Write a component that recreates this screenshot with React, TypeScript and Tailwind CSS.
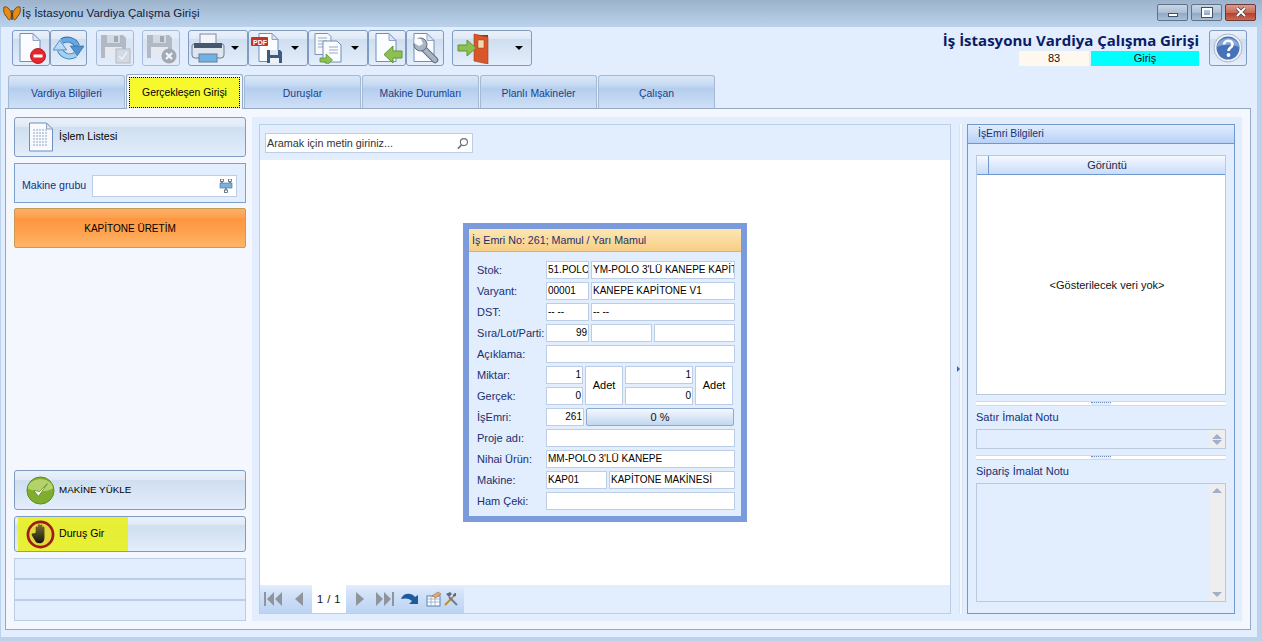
import React from "react";

const glossBtn =
  "bg-[linear-gradient(#e9f1fb_0%,#dfe9f6_24%,#cfdff0_25%,#d8e5f5_60%,#e4eefc_100%)] border border-[#7f9bc2] rounded-[3px]";

const Doc = ({ children }: { children?: React.ReactNode }) => (
  <svg viewBox="0 0 32 32" className="w-[32px] h-[32px]">
    <path d="M5 1.5h13l7 7v21H5z" fill="#fbfcff" stroke="#6f8fb8" />
    <path d="M18 1.5v7h7z" fill="#dfe6f0" stroke="#8ea6c6" />
    {children}
  </svg>
);

const Floppy = ({ children, faded }: { children?: React.ReactNode; faded?: boolean }) => (
  <svg viewBox="0 0 32 32" className={`w-[32px] h-[32px] ${faded ? "opacity-90" : ""}`}>
    <path d="M2 3h22l3 3v20H2z" fill="#8c9096" />
    <rect x="8" y="3" width="13" height="8" fill="#c9ccd0" />
    <rect x="15" y="4" width="4" height="6" fill="#6c7076" />
    <rect x="6" y="15" width="17" height="11" fill="#e8e9eb" />
    {children}
  </svg>
);

const Arrow = ({ x = 0, y = 0 }: { x?: number; y?: number }) => (
  <g transform={`translate(${x} ${y})`}>
    <path d="M0 3h6V-1l6.5 6L6 11V7H0z" fill="#8cc152" stroke="#5d9632" strokeWidth="0.8" />
  </g>
);

const Caret = () => <span className="w-0 h-0 border-x-[4px] border-x-transparent border-t-[4px] border-t-black" />;

const ToolBtn = ({ w, caret, disabled, children }: { w: string; caret?: boolean; disabled?: boolean; children: React.ReactNode }) => (
  <button
    className={`${w} h-[36px] flex items-center justify-between px-[2px] ${glossBtn} ${disabled ? "opacity-60" : ""}`}
  >
    {children}
    {caret && (
      <span className="mr-[6px] flex">
        <Caret />
      </span>
    )}
  </button>
);

const Tab = ({ label, active }: { label: string; active?: boolean }) =>
  active ? (
    <div className="w-[117px] h-[35px] -mt-[2px] bg-[#f4f8fe] border border-b-0 border-[#94a9c4] rounded-t-[3px] p-[2px] pb-0 -mb-[1px] z-10">
      <div className="h-[31px] bg-[#f6f92c] border border-dotted border-black flex items-center justify-center text-black text-[10.4px]">
        {label}
      </div>
    </div>
  ) : (
    <div className="w-[117px] h-[33px] border border-b-0 border-[#a3bad6] rounded-t-[3px] bg-[linear-gradient(#d9e6f7_0%,#c9dcf3_25%,#b4cdee_40%,#cfe0f6_100%)] flex items-center justify-center text-[#15428b] text-[10.4px] pt-[3px]">
      {label}
    </div>
  );

const SideBtn = ({ h, icon, label, hl, caps }: { h: string; icon: React.ReactNode; label: string; hl?: boolean; caps?: boolean }) => (
  <div className={`relative ${h} ${glossBtn} flex items-center pl-[9px] gap-[2px] text-black ${caps ? "text-[9.8px]" : "text-[10.6px]"}`}>
    {hl && <div className="absolute left-[3px] top-0 bottom-0 w-[110px] bg-[#e8f020]/90" />}
    <span className="relative flex w-[33px] justify-center">{icon}</span>
    <span className="relative">{label}</span>
  </div>
);

const Field = ({ w, text, right }: { w: string; text?: string; right?: boolean }) => (
  <div
    className={`${w} h-[18px] bg-white border border-[#bccee6] text-black text-[10px] px-[1px] leading-[16px] overflow-hidden whitespace-nowrap ${right ? "text-right" : ""}`}
  >
    {text}
  </div>
);

const Row = ({ label, children }: { label: string; children: React.ReactNode }) => (
  <div className="flex h-[18px] items-center">
    <span className="w-[69px] text-[#1c2f6e] whitespace-nowrap">{label}</span>
    <div className="flex gap-[2px]">{children}</div>
  </div>
);

const Splitter = () => (
  <div className="h-[5px] border-y border-[#c5dcf8] bg-white flex justify-center items-center">
    <span className="w-[20px] h-[3px] bg-[#e2edfd] border-t border-dotted border-[#6f8fb8]" />
  </div>
);

const ScrollBar = ({ full }: { full?: boolean }) => (
  <div className="w-[16px] bg-[#eeeeee] flex flex-col items-center justify-between py-[3px]">
    <span className="w-0 h-0 border-x-[5px] border-x-transparent border-b-[5px] border-b-[#a3aecb] mt-[1px]" />
    <span className={`w-0 h-0 border-x-[5px] border-x-transparent border-t-[5px] border-t-[#a3aecb] ${full ? "mb-[1px]" : ""}`} />
  </div>
);

const Skip = ({ flip }: { flip?: boolean }) => (
  <svg viewBox="0 0 20 16" className={`w-[20px] h-[16px] ${flip ? "-scale-x-100" : ""}`}>
    <path d="M1 1h2v14H1zM11 1v14L4 8zM19 1v14L12 8z" fill="#8f959c" />
  </svg>
);

export default function App() {
  return (
    <div className="w-[1262px] h-[641px] bg-[#bad2ec] flex flex-col overflow-hidden font-['Liberation_Sans',sans-serif] text-[11px]">
      {/* title bar */}
      <div className="h-[27px] shrink-0 bg-[linear-gradient(#9db3cc,#bad2ec)] flex items-center pl-[3px] pr-[6px]">
        <svg viewBox="0 0 18 16" className="w-[18px] h-[16px]">
          <path d="M8.5 8C7 2 3 0 1 1c-1 3 0 8 3 10 1 3 3 4 4 1z" fill="#e88a17" stroke="#6e4510" strokeWidth=".9" />
          <path d="M9.5 8C11 2 15 0 17 1c1 3 0 8-3 10-1 3-3 4-4 1z" fill="#e88a17" stroke="#6e4510" strokeWidth=".9" />
          <rect x="8.4" y="4" width="1.2" height="10" fill="#3a2a12" />
        </svg>
        <span className="ml-[1px] text-[#10203c] text-[11.5px]">İş İstasyonu Vardiya Çalışma Girişi</span>
        <div className="ml-auto flex gap-[3px] -mt-[3px]">
          <div className="w-[31px] h-[17px] border border-[#5f7288] rounded-[2px] bg-[linear-gradient(#c8d6e6_0%,#aebfd3_50%,#8fa7c2_51%,#a9c0d9_100%)] flex items-end justify-center pb-[3px]">
            <span className="w-[10px] h-[4px] bg-white border border-[#3f5068]" />
          </div>
          <div className="w-[31px] h-[17px] border border-[#5f7288] rounded-[2px] bg-[linear-gradient(#c8d6e6_0%,#aebfd3_50%,#8fa7c2_51%,#a9c0d9_100%)] flex items-center justify-center">
            <span className="w-[10px] h-[9px] bg-transparent border-2 border-white outline outline-[#3f5068]" />
          </div>
          <div className="w-[31px] h-[17px] border border-[#6b3a34] rounded-[2px] bg-[linear-gradient(#dc9a8e_0%,#c96a58_50%,#b23c28_51%,#cc6a55_100%)] flex items-center justify-center">
            <svg viewBox="0 0 12 10" className="w-[12px] h-[10px]">
              <path d="M2 1l8 8M10 1l-8 8" stroke="#3f3f48" strokeWidth="3.4" />
              <path d="M2 1l8 8M10 1l-8 8" stroke="#fff" strokeWidth="2" />
            </svg>
          </div>
        </div>
      </div>

      <div className="flex-1 ml-[1px] mr-[5px] mb-[4px] bg-[#e2edfd] flex flex-col min-h-0">
        {/* toolbar */}
        <div className="h-[43px] shrink-0 flex pt-[3px] pl-[11px] pr-[10px]">
          <div className="flex">
            <ToolBtn w="w-[38px]">
              <Doc>
                <circle cx="23" cy="24" r="7.5" fill="#e8252b" stroke="#b81c20" />
                <rect x="18.5" y="22.5" width="9" height="3" fill="#fff" />
              </Doc>
            </ToolBtn>
            <ToolBtn w="w-[37px]">
              <svg viewBox="0 0 32 32" className="w-[32px] h-[32px]">
                <path d="M9 9A11 11 0 0 1 25 14" fill="none" stroke="#2f6ea8" strokeWidth="6" />
                <path d="M9 9A11 11 0 0 1 25 14" fill="none" stroke="#6aa8de" strokeWidth="4.4" />
                <path d="M18 14h14l-7 10z" fill="#4f93d2" stroke="#2f6ea8" strokeWidth=".8" />
                <path d="M23 23A11 11 0 0 1 7 18" fill="none" stroke="#3a7ab4" strokeWidth="6" />
                <path d="M23 23A11 11 0 0 1 7 18" fill="none" stroke="#a6d0f2" strokeWidth="4.4" />
                <path d="M0 18h14L7 8z" fill="#b6d9f5" stroke="#3a7ab4" strokeWidth=".8" />
              </svg>
            </ToolBtn>
            <div className="w-[9px]" />
            <ToolBtn w="w-[38px]" disabled>
              <Floppy faded>
                <rect x="17" y="17" width="14" height="14" fill="#c9cbce" stroke="#8c9096" />
                <path d="M20 24l3 3 5-7" fill="none" stroke="#f4f4f4" strokeWidth="1.6" />
              </Floppy>
            </ToolBtn>
            <div className="w-[8px]" />
            <ToolBtn w="w-[38px]" disabled>
              <Floppy faded>
                <circle cx="24" cy="24" r="7.5" fill="#6e7176" />
                <path d="M21 21l6 6M27 21l-6 6" stroke="#fff" strokeWidth="2.4" />
              </Floppy>
            </ToolBtn>
            <div className="w-[8px]" />
            <ToolBtn w="w-[60px]" caret>
              <svg viewBox="0 0 34 32" className="w-[34px] h-[32px]">
                <rect x="9" y="2" width="16" height="11" fill="#f2f4f8" stroke="#7d8ca3" />
                <path d="M3 12h28a2 2 0 0 1 2 2v9a3 3 0 0 1-3 3H4a3 3 0 0 1-3-3v-9a2 2 0 0 1 2-2z" fill="#dfe5ee" stroke="#6d7e98" />
                <rect x="3" y="11" width="28" height="5" fill="#47576f" />
                <rect x="8" y="22" width="18" height="8" fill="#6fb3e3" stroke="#6d7e98" />
              </svg>
            </ToolBtn>
            <ToolBtn w="w-[60px]" caret>
              <svg viewBox="0 0 36 32" className="w-[36px] h-[32px]">
                <path d="M8 1.5h13l6 6v22H8z" fill="#fbfcff" stroke="#6f8fb8" />
                <path d="M21 1.5v6h6z" fill="#dfe6f0" stroke="#8ea6c6" />
                <rect x="0" y="5" width="17" height="9" rx="1" fill="#c8302a" />
                <text x="2" y="12.5" fontSize="7" fontWeight="700" fill="#fff" fontFamily="'Liberation Sans',sans-serif">PDF</text>
                <path d="M16 18h13l2 2v11H16z" fill="#3f5a82" />
                <rect x="19" y="18" width="8" height="5" fill="#dfe6f0" />
                <rect x="19" y="26" width="9" height="5" fill="#eef1f6" />
              </svg>
            </ToolBtn>
            <ToolBtn w="w-[60px]" caret>
              <svg viewBox="0 0 34 32" className="w-[34px] h-[32px]">
                <path d="M4 1.5h13l3 3v18H4z" fill="#f6f8fc" stroke="#7d93b5" />
                <path d="M7 6h9M7 9h9M7 12h9M7 15h9" stroke="#9aa9bf" />
                <path d="M12 9h14l4 4v17H12z" fill="#fbfcff" stroke="#6f8fb8" />
                <path d="M18 15h9M18 18h9M18 21h9" stroke="#9aa9bf" />
                <Arrow x={9} y={23} />
              </svg>
            </ToolBtn>
            <ToolBtn w="w-[38px]">
              <Doc>
                <path d="M31 19v7h-9v5l-9-8.5 9-8.5v5z" fill="#8cc152" stroke="#5d9632" />
              </Doc>
            </ToolBtn>
            <ToolBtn w="w-[38px]">
              <Doc>
                <path d="M13 15l13 13" stroke="#5f6d82" strokeWidth="6.5" strokeLinecap="round" />
                <path d="M13 15l13 13" stroke="#a9b4c2" strokeWidth="4.5" strokeLinecap="round" />
                <circle cx="11.5" cy="12.5" r="6.5" fill="#a9b4c2" stroke="#5f6d82" />
                <path d="M6 6l6 1 2 5-4 2-5-3z" fill="#fbfcff" />
              </Doc>
            </ToolBtn>
            <div className="w-[8px]" />
            <ToolBtn w="w-[80px]" caret>
              <svg viewBox="0 0 36 32" className="w-[36px] h-[32px] ml-[2px]">
                <rect x="18" y="3" width="13" height="26" fill="#8f3217" />
                <path d="M17 2l14 3v27l-14-3z" fill="#d9562a" stroke="#a33c18" strokeWidth=".6" />
                <rect x="21" y="8" width="6" height="8" fill="#f0d9a8" stroke="#a33c18" strokeWidth=".5" />
                <path d="M1 13h9V8l9 8-9 8v-5H1z" fill="#8cc152" stroke="#5d9632" />
              </svg>
            </ToolBtn>
          </div>
          <div className="ml-auto flex items-start gap-[10px]">
            <div className="flex flex-col items-end w-[262px]">
              <div className="h-[21px] font-['Open_Sans',sans-serif] font-bold text-[15px] leading-[21px] text-[#0b1b66] whitespace-nowrap">
                İş İstasyonu Vardiya Çalışma Girişi
              </div>
              <div className="flex gap-[2px] h-[15px] leading-[15px] text-[#111]">
                <div className="w-[70px] bg-[#fff8ee] text-center">83</div>
                <div className="w-[108px] bg-[#00ffff] text-center">Giriş</div>
              </div>
            </div>
            <div className={`w-[38px] h-[36px] ${glossBtn} flex items-center justify-center`}>
              <svg viewBox="0 0 30 30" className="w-[30px] h-[30px]">
                <circle cx="15" cy="15" r="14" fill="#eef2f8" stroke="#a9b6ca" />
                <circle cx="15" cy="15" r="11.5" fill="#4673b8" />
                <path d="M4 14a11 9 0 0 1 22 0c-6-3-16-3-22 0z" fill="#86a8d8" />
                <path d="M11 11.5c0-5 9-5 8.5 0 0 3-4 3-4 6.5" fill="none" stroke="#fff" strokeWidth="2.6" />
                <circle cx="15.5" cy="22" r="1.9" fill="#fff" />
              </svg>
            </div>
          </div>
        </div>

        {/* tabs */}
        <div className="h-[38px] shrink-0 flex items-end gap-[1px] pl-[7px] pt-[5px]">
          <Tab label="Vardiya Bilgileri" />
          <Tab label="Gerçekleşen Girişi" active />
          <Tab label="Duruşlar" />
          <Tab label="Makine Durumları" />
          <Tab label="Planlı Makineler" />
          <Tab label="Çalışan" />
        </div>

        {/* main panel */}
        <div className="ml-[4px] mb-[7px] w-[1246px] h-[522px] border border-[#94a9c4] bg-[#f4f8fe] p-[8px] flex gap-[6px]">
          {/* left column */}
          <div className="w-[232px] flex flex-col">
            <SideBtn
              h="h-[40px]"
              label="İşlem Listesi"
              icon={
                <svg viewBox="0 0 26 30" className="w-[26px] h-[30px]">
                  <path d="M1.5 1h17l6 6v22h-23z" fill="#f8fafd" stroke="#6f8fb8" />
                  <path d="M18.5 1v6h6z" fill="#dfe6f0" stroke="#8ea6c6" />
                  <path d="M5 8h14M5 11h14M5 14h14M5 17h14M5 20h14M5 23h14" stroke="#8fa4c4" strokeDasharray="2 1" />
                </svg>
              }
            />
            <div className="mt-[6px] h-[40px] bg-[#e2edfd] border border-[#7ea0cc] flex items-center pl-[7px] pt-[5px] pr-[8px] justify-between">
              <span className="text-[#15307a] text-[10.6px]">Makine grubu</span>
              <div className="w-[145px] h-[22px] bg-white border border-[#bccee6] flex items-center justify-end pr-[3px]">
                <svg viewBox="0 0 14 14" className="w-[14px] h-[14px]">
                  <rect x="1" y="4" width="12" height="5" fill="#7fb0dc" stroke="#3f6c9c" strokeWidth=".6" />
                  <path d="M3 0v4M11 0v4M7 9v3" stroke="#33495f" />
                  <rect x="1.5" y="0" width="3" height="2.5" fill="#fff" stroke="#33495f" strokeWidth=".7" />
                  <rect x="9.5" y="0" width="3" height="2.5" fill="#fff" stroke="#33495f" strokeWidth=".7" />
                  <rect x="5.5" y="11" width="3" height="2.5" fill="#fff" stroke="#33495f" strokeWidth=".7" />
                </svg>
              </div>
            </div>
            <div className="mt-[5px] h-[40px] border border-[#c79a55] rounded-[2px] bg-[linear-gradient(#ffae65_0%,#fda050_22%,#fd963f_25%,#fea04c_55%,#ffb566_100%)] flex items-center justify-center text-black text-[10px]">
              KAPİTONE ÜRETİM
            </div>
            <div className="flex-1" />
            <SideBtn
              h="h-[40px]"
              caps
              label="MAKİNE YÜKLE"
              icon={
                <svg viewBox="0 0 30 30" className="w-[29px] h-[29px]">
                  <circle cx="15" cy="15" r="14" fill="#7fae2f" stroke="#5d8a22" />
                  <path d="M2 13a13 10 0 0 1 26 0c-8 4-18 4-26 0z" fill="#b3d267" />
                  <path d="M8 15l5 6 9-13-8 8z" fill="#fff" stroke="#4d7a1a" strokeWidth=".7" />
                </svg>
              }
            />
            <div className="h-[6px]" />
            <SideBtn
              h="h-[36px]"
              hl
              label="Duruş Gir"
              icon={
                <svg viewBox="0 0 30 30" className="w-[29px] h-[29px]">
                  <defs>
                    <linearGradient id="handFill" x1="0" y1="0" x2="0" y2="1">
                      <stop offset="0" stopColor="#7a6f2c" />
                      <stop offset="1" stopColor="#141414" />
                    </linearGradient>
                  </defs>
                  <circle cx="15" cy="15" r="13" fill="#e4d73a" stroke="#9c1d18" strokeWidth="2.8" />
                  <path d="M10 13V7.5a1.2 1.2 0 0 1 2.2 0V12V5.5a1.2 1.2 0 0 1 2.4 0V12V5.5a1.2 1.2 0 0 1 2.3 0V12V7.5a1.2 1.2 0 0 1 2.2 0V18c0 4-2 6-5 6s-4-1-5-3l-3-5c-1-2 1-3 2-2z" fill="url(#handFill)" />
                </svg>
              }
            />
            <div className="h-[6px]" />
            <div className="h-[21px] bg-[#e2edfd] border border-[#bccee6]" />
            <div className="h-[21px] bg-[#e2edfd] border border-[#bccee6]" />
            <div className="h-[21px] bg-[#e2edfd] border border-[#bccee6]" />
          </div>

          {/* content region */}
          <div className="flex-1 bg-[#e2edfd] p-[7px] flex min-w-0">
            <div className="w-[692px] border border-[#bccee6] flex flex-col">
              <div className="h-[35px] shrink-0 flex items-center pl-[5px] pt-[1px]">
                <div className="w-[208px] h-[20px] bg-white border border-[#bccee6] flex items-center justify-between pl-[1px] pr-[3px] text-[#333] text-[10.8px]">
                  Aramak için metin giriniz...
                  <svg viewBox="0 0 14 14" className="w-[13px] h-[13px]">
                    <circle cx="8.5" cy="5.5" r="3.8" fill="none" stroke="#6b7280" strokeWidth="1.2" />
                    <path d="M6 8.5l-4 4" stroke="#6b7280" strokeWidth="1.6" />
                  </svg>
                </div>
              </div>
              <div className="flex-1 bg-white flex justify-center items-start pt-[63px]">
                {/* work order card */}
                <div className="w-[284px] h-[299px] border-[6px] border-[#7b9bdc] bg-[#e2edfd] flex flex-col">
                  <div className="h-[23px] shrink-0 bg-[linear-gradient(#fde6b4,#f7cf86)] border-b border-[#9fb9dc] flex items-center pl-[3px] text-[#1c2f6e] text-[10.7px]">
                    İş Emri No: 261; Mamul / Yarı Mamul
                  </div>
                  <div className="pt-[9px] pl-[8px] flex flex-col gap-[3px]">
                    <Row label="Stok:">
                      <Field w="w-[43px]" text="51.POLO" />
                      <Field w="w-[144px]" text="YM-POLO 3'LÜ KANEPE KAPİT" />
                    </Row>
                    <Row label="Varyant:">
                      <Field w="w-[43px]" text="00001" />
                      <Field w="w-[144px]" text="KANEPE KAPİTONE V1" />
                    </Row>
                    <Row label="DST:">
                      <Field w="w-[43px]" text="-- --" />
                      <Field w="w-[144px]" text="-- --" />
                    </Row>
                    <Row label="Sıra/Lot/Parti:">
                      <Field w="w-[43px]" text="99" right />
                      <Field w="w-[61px]" />
                      <Field w="w-[81px]" />
                    </Row>
                    <Row label="Açıklama:">
                      <Field w="w-[189px]" />
                    </Row>
                    <div className="flex">
                      <div className="w-[69px] flex flex-col gap-[3px] text-[#1c2f6e]">
                        <span className="h-[18px] leading-[18px]">Miktar:</span>
                        <span className="h-[18px] leading-[18px]">Gerçek:</span>
                      </div>
                      <div className="flex gap-[2px]">
                        <div className="flex flex-col gap-[3px]">
                          <Field w="w-[37px]" text="1" right />
                          <Field w="w-[37px]" text="0" right />
                        </div>
                        <div className="w-[38px] h-[39px] bg-white border border-[#bccee6] flex items-center justify-center text-black">Adet</div>
                        <div className="flex flex-col gap-[3px]">
                          <Field w="w-[68px]" text="1" right />
                          <Field w="w-[68px]" text="0" right />
                        </div>
                        <div className="w-[38px] h-[39px] bg-white border border-[#bccee6] flex items-center justify-center text-black">Adet</div>
                      </div>
                    </div>
                    <Row label="İşEmri:">
                      <Field w="w-[38px]" text="261" right />
                      <div className="w-[148px] h-[18px] rounded-[2px] border border-[#8fa9cc] bg-[linear-gradient(#f4f8fe,#c3d7f0)] text-center leading-[16px] text-[#111]">0 %</div>
                    </Row>
                    <Row label="Proje adı:">
                      <Field w="w-[189px]" />
                    </Row>
                    <Row label="Nihai Ürün:">
                      <Field w="w-[189px]" text="MM-POLO 3'LÜ KANEPE" />
                    </Row>
                    <Row label="Makine:">
                      <Field w="w-[61px]" text="KAP01" />
                      <Field w="w-[126px]" text="KAPİTONE MAKİNESİ" />
                    </Row>
                    <Row label="Ham Çeki:">
                      <Field w="w-[189px]" />
                    </Row>
                  </div>
                </div>
              </div>
              {/* report nav */}
              <div className="h-[28px] shrink-0 flex">
                <div className="w-[204px] h-full bg-[linear-gradient(#e2edfd_0%,#d2e2f8_30%,#bcd3f2_100%)] flex items-center pl-[3px]">
                  <Skip />
                  <svg viewBox="0 0 12 16" className="ml-[10px] w-[12px] h-[16px]"><path d="M10 1v14L2 8z" fill="#8f959c" /></svg>
                  <div className="ml-[7px] w-[34px] h-full bg-white flex items-center justify-center text-[#111] tracking-[0.5px]">1 / 1</div>
                  <svg viewBox="0 0 12 16" className="ml-[8px] w-[12px] h-[16px]"><path d="M2 1v14l8-7z" fill="#8f959c" /></svg>
                  <span className="ml-[9px] flex"><Skip flip /></span>
                  <svg viewBox="0 0 20 16" className="ml-[5px] w-[20px] h-[16px]">
                    <path d="M1 8c2-6 10-7 14-2l3-2v9h-9l3-3c-3-3-7-3-11-2z" fill="#1d5a9e" />
                  </svg>
                  <svg viewBox="0 0 16 16" className="ml-[6px] w-[16px] h-[16px]">
                    <rect x="1" y="5" width="13" height="10" fill="#fff" stroke="#5a7fae" />
                    <path d="M1 8h13M1 11h13M5 5v10M9 5v10" stroke="#7f9fc8" strokeWidth=".7" />
                    <path d="M6 5l6-4 3 2-5 4z" fill="#e0a878" stroke="#8a5a30" strokeWidth=".5" />
                  </svg>
                  <svg viewBox="0 0 16 16" className="ml-[1px] w-[16px] h-[16px]">
                    <path d="M2 14l8-8" stroke="#c08a3a" strokeWidth="2" />
                    <path d="M14 14L6 6" stroke="#6f7d8c" strokeWidth="2" />
                    <path d="M3 3l4-2 2 2-3 3zM13 2a3 3 0 0 0-3 4l3-1z" fill="#5f6d7d" />
                  </svg>
                </div>
              </div>
            </div>

            {/* splitter */}
            <div className="w-[16px] flex justify-center relative">
              <div className="w-[4px] ml-[3px] bg-[#f4f8fe] border-x border-[#d5e4f8]" />
              <span className="absolute left-[6px] top-[242px] w-0 h-0 border-y-[3px] border-y-transparent border-l-[3px] border-l-[#3a66b0]" />
            </div>

            {/* info panel */}
            <div className="w-[268px] border border-[#6f97d0] flex flex-col">
              <div className="h-[19px] shrink-0 bg-[linear-gradient(#e2edfd,#b7d2f7)] border-b border-[#6f97d0] flex items-center pl-[10px] text-[#15307a] text-[10.4px]">
                İşEmri Bilgileri
              </div>
              <div className="flex-1 flex flex-col px-[8px] pt-[11px] pb-[11px]">
                <div className="h-[240px] shrink-0 border border-[#b9c9e0] bg-white flex flex-col">
                  <div className="h-[19px] shrink-0 bg-[linear-gradient(#f6f9ff,#c9dcf8)] border-b border-[#6f97d0] flex">
                    <div className="w-[12px] border-r border-[#6f97d0]" />
                    <div className="flex-1 text-center leading-[18px] text-[#1a2a4a]">Görüntü</div>
                  </div>
                  <div className="flex-1 flex items-center justify-center text-[#111] pl-[12px] pt-[2px]">&lt;Gösterilecek veri yok&gt;</div>
                </div>
                <div className="mt-[6px]"><Splitter /></div>
                <div className="h-[23px] shrink-0 flex items-center text-[#15307a]">Satır İmalat Notu</div>
                <div className="h-[20px] shrink-0 border border-[#b9c9e0] flex justify-end">
                  <ScrollBar />
                </div>
                <div className="mt-[6px]"><Splitter /></div>
                <div className="h-[23px] shrink-0 flex items-center text-[#15307a]">Sipariş İmalat Notu</div>
                <div className="flex-1 border border-[#b9c9e0] flex justify-end">
                  <ScrollBar full />
                </div>
              </div>
            </div>
          </div>
        </div>
      </div>
    </div>
  );
}
